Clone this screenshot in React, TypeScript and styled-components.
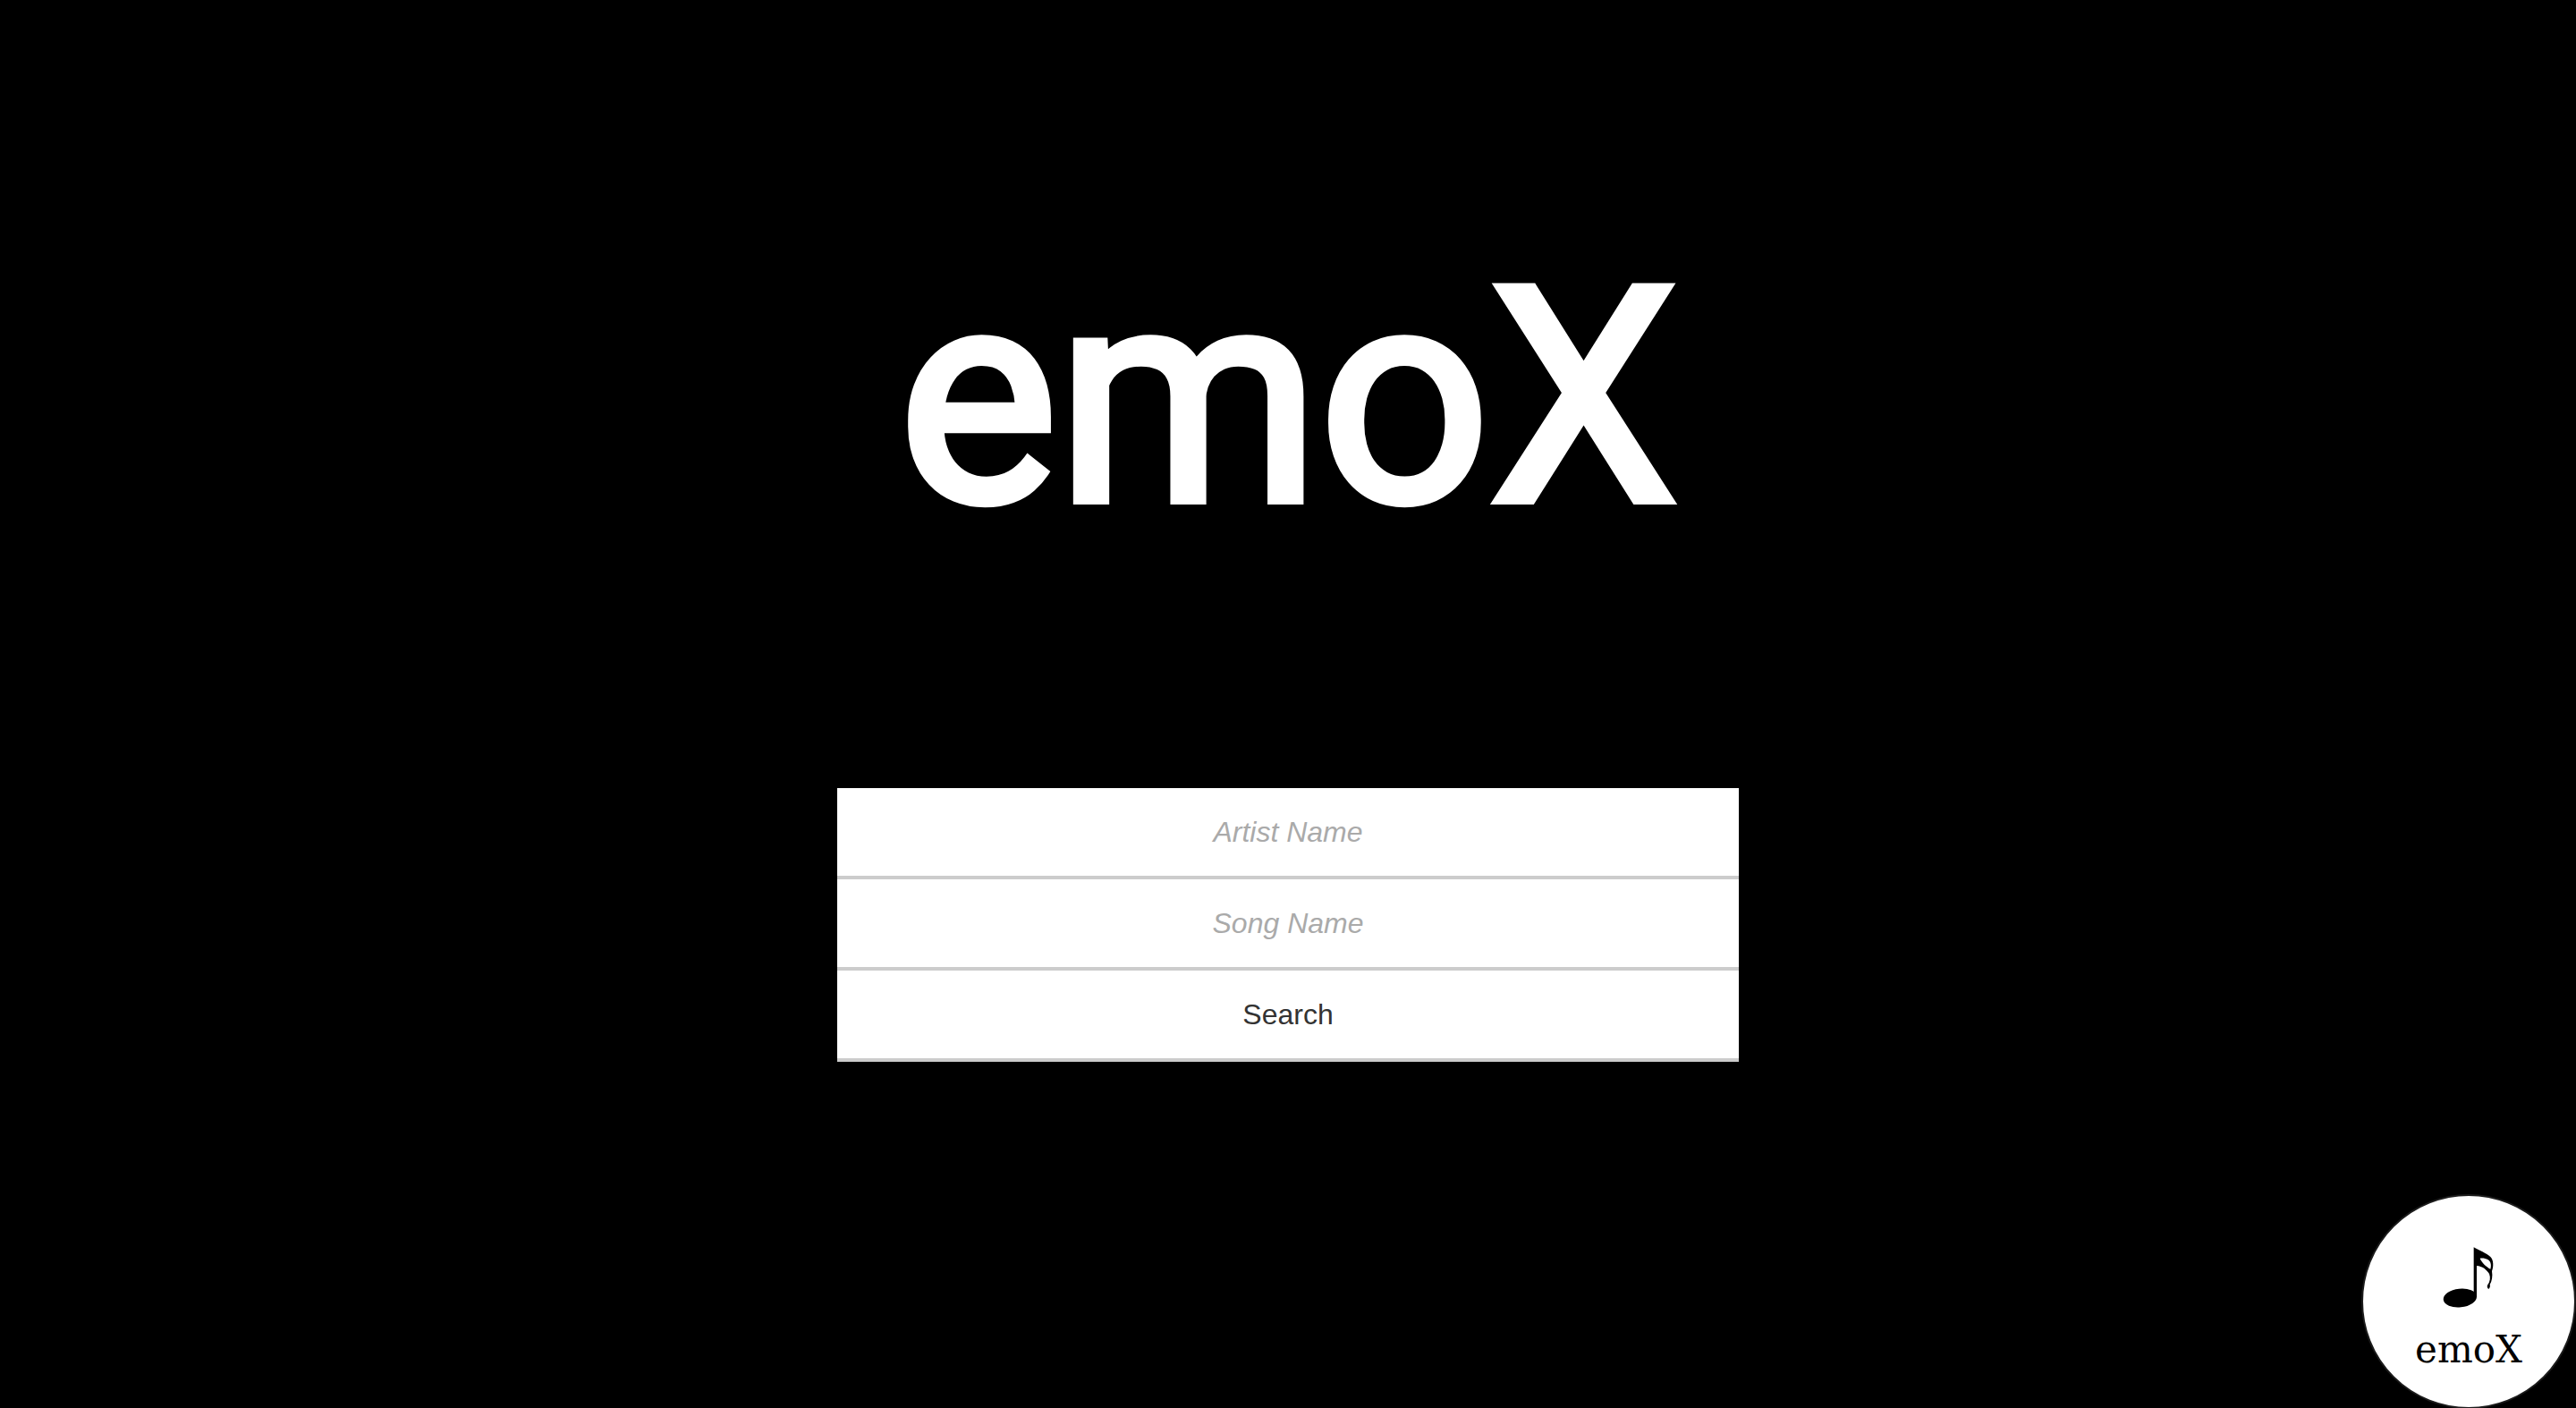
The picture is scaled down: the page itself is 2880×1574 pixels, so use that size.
import React, { FormEvent, useState } from "react";
import styled, { createGlobalStyle, css } from "styled-components";

const GlobalStyle = createGlobalStyle`
  *, *::before, *::after {
    box-sizing: border-box;
  }
  body {
    margin: 0;
    background: #000;
    font-family: "Liberation Sans", Helvetica, Arial, sans-serif;
  }
`;

const Page = styled.main`
  min-height: 100vh;
  padding-top: 245px;
  display: flex;
  flex-direction: column;
  align-items: center;
  gap: 236px;
`;

const Title = styled.h1`
  margin: 0;
  color: #fff;
  font-family: Roboto, "Liberation Sans", sans-serif;
  font-size: 334px;
  font-weight: 400;
  line-height: 400px;
  -webkit-text-stroke: 10px #fff;
`;

const SearchForm = styled.form`
  width: 35%;
  display: flex;
  flex-direction: column;
`;

const rowStyle = css`
  width: 100%;
  height: 102px;
  margin: 0;
  padding: 0 32px;
  border: 0;
  border-bottom: 4px solid #ccc;
  border-radius: 0;
  background: #fff;
  color: #333;
  font: 400 32px/40px "Liberation Sans", Helvetica, Arial, sans-serif;
  text-align: center;
`;

const TextField = styled.input`
  ${rowStyle}

  &::placeholder {
    color: #aaa;
    font-style: italic;
    opacity: 1;
  }
`;

const SubmitButton = styled.button`
  ${rowStyle}
  cursor: pointer;
`;

const Badge = styled.a`
  position: fixed;
  right: 0;
  bottom: -1px;
  width: 240px;
  height: 240px;
  padding-top: 56px;
  display: flex;
  flex-direction: column;
  align-items: center;
  gap: 22px;
  border: 2px solid #1c1c1c;
  border-radius: 50%;
  background: #fff;
  color: #000;
  text-decoration: none;
`;

const BadgeText = styled.span`
  font-family: "DejaVu Serif", serif;
  font-size: 42px;
  line-height: 48px;
`;

const NoteIcon = () => (
  <svg width="60" height="70" viewBox="90 40 180 210" aria-hidden="true">
    <ellipse cx="151" cy="214" rx="56" ry="31" transform="rotate(-6 151 214)" />
    <path d="M197 44C214 54 240 64 253 76C264 87 264 109 258 124C261 142 258 158 251 169C253 175 251 180 247 184C243 181 241 176 243 171C252 160 254 146 249 133C240 119 226 107 207 106V212H197ZM218 81C223 94 238 109 253 117C257 104 254 91 245 86C237 81 228 80 218 81Z" />
  </svg>
);

export default function App() {
  const [artist, setArtist] = useState("");
  const [song, setSong] = useState("");

  const handleSubmit = (event: FormEvent) => event.preventDefault();

  return (
    <>
      <GlobalStyle />
      <Page>
        <Title>emoX</Title>
        <SearchForm onSubmit={handleSubmit}>
          <TextField
            type="text"
            aria-label="Artist Name"
            placeholder="Artist Name"
            value={artist}
            onChange={(event) => setArtist(event.target.value)}
          />
          <TextField
            type="text"
            aria-label="Song Name"
            placeholder="Song Name"
            value={song}
            onChange={(event) => setSong(event.target.value)}
          />
          <SubmitButton type="submit">Search</SubmitButton>
        </SearchForm>
      </Page>
      <Badge href="#">
        <NoteIcon />
        <BadgeText>emoX</BadgeText>
      </Badge>
    </>
  );
}
